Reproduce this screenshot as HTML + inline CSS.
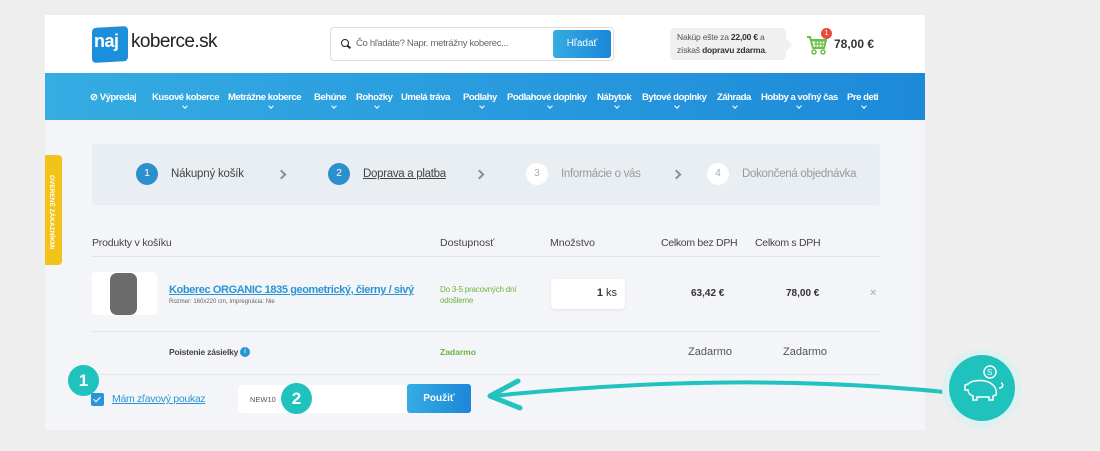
<!DOCTYPE html><html><head><meta charset="utf-8"><style>
*{box-sizing:border-box;margin:0;padding:0}
body{width:1100px;height:451px;background:#eeeeee;font-family:"Liberation Sans",sans-serif;position:relative;overflow:hidden;color:#333}
.a{position:absolute}
.wrap{left:45px;top:15px;width:880px;height:415px;background:#f4f5f8}
.hdr{left:45px;top:15px;width:880px;height:58px;background:#fff}
.nav{left:45px;top:73px;width:880px;height:47px;background:linear-gradient(90deg,#35ace2,#1d8ad9)}
.nav span{position:absolute;top:19px;color:#fff;font-size:9.5px;letter-spacing:-0.45px;font-weight:bold;white-space:nowrap}
.nav i{position:absolute;top:31px;width:4px;height:4px;border-right:1.3px solid #fff;border-bottom:1.3px solid #fff;transform:rotate(45deg)}
.circ{width:22px;height:22px;border-radius:50%;font-size:10px;text-align:center;line-height:22px}
.t{font-size:11px;white-space:nowrap}
.chev{width:7px;height:7px;border-right:2.5px solid #8a9097;border-top:2.5px solid #8a9097;transform:rotate(45deg)}
.line{height:1px;background:#e3e5ea}
</style></head><body>
<div class="a wrap"></div>
<div class="a hdr"></div>
<div class="a" style="left:92px;top:27px;width:36px;height:35px;background:#1c8fdc;border-radius:4px;transform:skewY(-3deg)"></div>
<div class="a" style="left:94px;top:31px;color:#fff;font-size:18px;font-weight:bold;letter-spacing:-0.5px">naj</div>
<div class="a" style="left:131px;top:31px;color:#222;font-size:19px;letter-spacing:-0.6px">koberce.sk</div>
<div class="a" style="left:330px;top:27px;width:284px;height:34px;border:1px solid #ddd;border-radius:4px;background:#fff"></div>
<div class="a" style="left:341px;top:39px;width:8px;height:8px;border:1.6px solid #222;border-radius:50%"></div>
<div class="a" style="left:347px;top:46px;width:4px;height:1.6px;background:#222;transform:rotate(45deg)"></div>
<div class="a t" style="left:356px;top:38px;color:#666;font-size:9.5px;letter-spacing:-0.3px">Čo hľadáte? Napr. metrážny koberec...</div>
<div class="a" style="left:553px;top:30px;width:58px;height:28px;border-radius:3px;background:linear-gradient(90deg,#35ace2,#1c86d9);color:#fff;font-size:10px;text-align:center;line-height:28px">Hľadať</div>
<div class="a" style="left:670px;top:28px;width:116px;height:32px;background:#f0f0f0;border-radius:4px;font-size:8.5px;color:#555;line-height:13px;padding:3px 0 0 7px;letter-spacing:-0.2px">Nakúp ešte za <b style="color:#333">22,00 €</b> a<br>získaš <b style="color:#333">dopravu zdarma</b>.</div>
<div class="a" style="left:786px;top:39px;width:0;height:0;border-left:6px solid #f0f0f0;border-top:6px solid transparent;border-bottom:6px solid transparent"></div>
<svg class="a" style="left:806px;top:35px" width="22" height="20" viewBox="0 0 22 20"><path d="M1 2h3l3 11h11l2-8H5" fill="none" stroke="#6cbe45" stroke-width="2"/><path d="M7 6h12M8 9h11M10 5v7M13 5v7M16 5v7" stroke="#6cbe45" stroke-width="1.3"/><circle cx="8" cy="17" r="2" fill="none" stroke="#6cbe45" stroke-width="1.5"/><circle cx="17" cy="17" r="2" fill="none" stroke="#6cbe45" stroke-width="1.5"/></svg>
<div class="a circ" style="left:821px;top:28px;width:11px;height:11px;line-height:11px;background:#e84b3c;color:#fff;font-size:7px">1</div>
<div class="a" style="left:834px;top:37px;font-size:12px;font-weight:bold;color:#333">78,00 €</div>
<div class="a nav">
<span style="left:45px">⊘ Výpredaj</span>
<span style="left:107px">Kusové koberce</span><i style="left:138px"></i>
<span style="left:183px">Metrážne koberce</span><i style="left:224px"></i>
<span style="left:269px">Behúne</span><i style="left:287px"></i>
<span style="left:311px">Rohožky</span><i style="left:330px"></i>
<span style="left:356px">Umelá tráva</span>
<span style="left:418px">Podlahy</span><i style="left:435px"></i>
<span style="left:462px">Podlahové doplnky</span><i style="left:503px"></i>
<span style="left:552px">Nábytok</span><i style="left:570px"></i>
<span style="left:597px">Bytové doplnky</span><i style="left:630px"></i>
<span style="left:672px">Záhrada</span><i style="left:688px"></i>
<span style="left:716px">Hobby a voľný čas</span><i style="left:752px"></i>
<span style="left:802px">Pre deti</span><i style="left:817px"></i>
</div>
<div class="a" style="left:45px;top:155px;width:17px;height:110px;background:#f2c319;border-radius:0 4px 4px 0"></div>
<div class="a" style="left:48px;top:175px;color:#fff;font-size:6.5px;font-weight:bold;writing-mode:vertical-rl;white-space:nowrap">OVERENÉ ZÁKAZNÍKMI</div>
<div class="a" style="left:92px;top:144px;width:788px;height:61px;background:#e9eef3;border-radius:3px"></div>
<div class="a circ" style="left:136px;top:163px;background:#2d8fce;color:#fff">1</div>
<div class="a t" style="left:171px;top:168px;font-size:11.5px;color:#444;letter-spacing:-0.2px">Nákupný košík</div>
<div class="a chev" style="left:278px;top:171px"></div>
<div class="a circ" style="left:328px;top:163px;background:#2d8fce;color:#fff">2</div>
<div class="a t" style="left:363px;top:168px;font-size:11.5px;color:#444;text-decoration:underline;letter-spacing:-0.3px">Doprava a platba</div>
<div class="a chev" style="left:476px;top:171px"></div>
<div class="a circ" style="left:526px;top:163px;background:#fff;color:#aaa">3</div>
<div class="a t" style="left:561px;top:168px;font-size:11.5px;color:#999;letter-spacing:-0.3px">Informácie o vás</div>
<div class="a chev" style="left:673px;top:171px"></div>
<div class="a circ" style="left:707px;top:163px;background:#fff;color:#aaa">4</div>
<div class="a t" style="left:742px;top:168px;font-size:11.5px;color:#999;letter-spacing:-0.3px">Dokončená objednávka</div>
<div class="a t" style="left:92px;top:237px;color:#444;font-size:10.5px;letter-spacing:-0.2px">Produkty v košíku</div>
<div class="a t" style="left:440px;top:237px;color:#444;font-size:10.5px">Dostupnosť</div>
<div class="a t" style="left:550px;top:237px;color:#444;font-size:10.5px">Množstvo</div>
<div class="a t" style="left:661px;top:237px;color:#444;font-size:10.5px;letter-spacing:-0.3px">Celkom bez DPH</div>
<div class="a t" style="left:755px;top:237px;color:#444;font-size:10.5px;letter-spacing:-0.3px">Celkom s DPH</div>
<div class="a line" style="left:92px;top:256px;width:788px"></div>
<div class="a" style="left:92px;top:272px;width:65px;height:43px;background:#fff;border-radius:4px"></div>
<div class="a" style="left:110px;top:273px;width:27px;height:42px;background:#6b6b6b;border-radius:7px"></div>
<div class="a t" style="left:169px;top:284px;font-size:11px;font-weight:bold;color:#2a95d6;text-decoration:underline;letter-spacing:-0.4px">Koberec ORGANIC 1835 geometrický, čierny / sivý</div>
<div class="a t" style="left:169px;top:299px;font-size:6px;color:#666">Rozmer: 160x220 cm, Impregnácia: Nie</div>
<div class="a" style="left:440px;top:284px;font-size:8px;color:#6cb33f;line-height:11px;letter-spacing:-0.2px">Do 3-5 pracovných dní<br>odošleme</div>
<div class="a" style="left:551px;top:279px;width:74px;height:30px;background:#fff;border-radius:4px;box-shadow:0 1px 3px rgba(0,0,0,.08);text-align:right;padding:8px 8px 0 0;font-size:11px"><b>1</b> ks</div>
<div class="a t" style="left:691px;top:288px;font-weight:bold;font-size:10px">63,42 €</div>
<div class="a t" style="left:786px;top:288px;font-weight:bold;font-size:10px">78,00 €</div>
<div class="a t" style="left:870px;top:287px;color:#bbb;font-size:11px;font-weight:bold">×</div>
<div class="a line" style="left:92px;top:331px;width:788px"></div>
<div class="a t" style="left:169px;top:347px;font-size:8.5px;font-weight:bold;color:#444;letter-spacing:-0.2px">Poistenie zásielky</div>
<div class="a circ" style="left:240px;top:347px;width:10px;height:10px;line-height:10px;background:#2a95d6;color:#fff;font-size:7px">i</div>
<div class="a t" style="left:440px;top:347px;font-size:8.5px;font-weight:bold;color:#6cb33f">Zadarmo</div>
<div class="a t" style="left:688px;top:346px;font-size:11px;color:#555">Zadarmo</div>
<div class="a t" style="left:783px;top:346px;font-size:11px;color:#555">Zadarmo</div>
<div class="a line" style="left:92px;top:374px;width:788px"></div>
<div class="a" style="left:91px;top:393px;width:13px;height:13px;background:#2a95d6;border-radius:2px"></div>
<div class="a" style="left:95px;top:395px;width:4px;height:7px;border-right:1.5px solid #fff;border-bottom:1.5px solid #fff;transform:rotate(45deg)"></div>
<div class="a t" style="left:112px;top:393px;font-size:10.5px;color:#2a95d6;text-decoration:underline;letter-spacing:-0.3px">Mám zľavový poukaz</div>
<div class="a" style="left:238px;top:385px;width:170px;height:28px;background:#fff;border-radius:4px 0 0 4px"></div>
<div class="a t" style="left:250px;top:395px;font-size:7.5px;color:#555">NEW10</div>
<div class="a" style="left:407px;top:384px;width:64px;height:29px;border-radius:3px;background:linear-gradient(90deg,#35ace2,#1c86d9);color:#fff;font-size:10px;font-weight:bold;text-align:center;line-height:29px">Použiť</div>
<div class="a circ" style="left:68px;top:365px;width:31px;height:31px;line-height:31px;background:#1fc2bd;color:#fff;font-size:17px;font-weight:bold">1</div>
<div class="a circ" style="left:281px;top:383px;width:31px;height:31px;line-height:31px;background:#1fc2bd;color:#fff;font-size:17px;font-weight:bold">2</div>
<svg class="a" style="left:470px;top:350px" width="630" height="101" viewBox="470 350 630 101"><path d="M955 393 C800 377 650 380 492 396" fill="none" stroke="#22c3bf" stroke-width="4"/><path d="M518 381 L490 396 L520 408" fill="none" stroke="#22c3bf" stroke-width="5" stroke-linecap="round" stroke-linejoin="round"/>
<circle cx="982" cy="388" r="40" fill="#dff0f0"/><circle cx="982" cy="388" r="33" fill="#1fc2bd"/>
<g fill="none" stroke="#fff" stroke-width="1.5"><circle cx="990" cy="372" r="6"/><path d="M967 385c5-6 20-6 26 0 3 3 4 6 3 10l-3 1v4h-4v-3h-12v3h-4v-4c-3-1-5-3-5-6h-3v-5l3-1z"/><path d="M999 388c4 0 5-4 2-5"/></g><text x="987" y="375" fill="#fff" font-size="8" font-family="Liberation Sans">S</text></svg>
</body></html>
